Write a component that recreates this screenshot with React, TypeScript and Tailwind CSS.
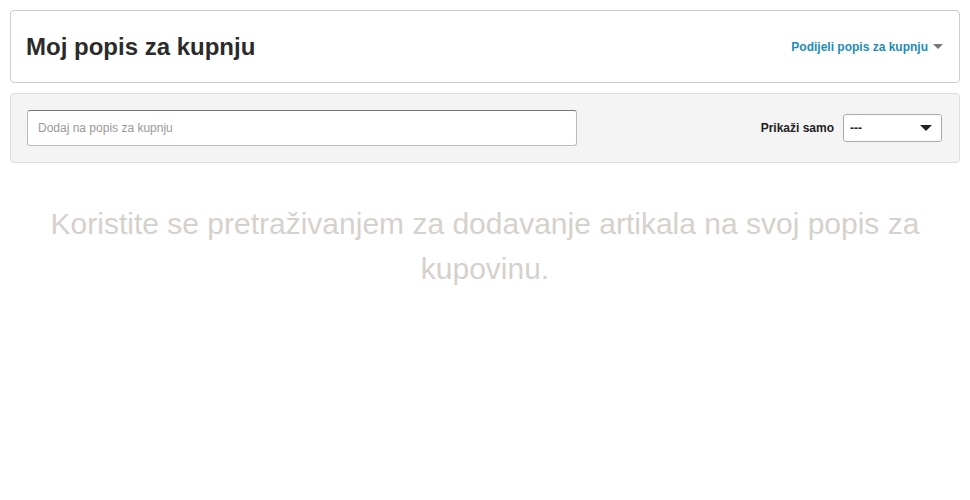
import React from 'react';

export default function App() {
  return (
    <div className="min-h-[500px] bg-white px-[10px] pt-[10px] font-['Liberation_Sans',Arial,sans-serif] text-[#333]">
      <div className="flex h-[73px] items-center justify-between rounded-[4px] border border-[#ccc] bg-white pl-[15px] pr-[16px]">
        <h1 className="text-[24px] font-bold text-[#2b2b2b]">Moj popis za kupnju</h1>
        <button className="flex items-center gap-[5px] text-[12px] font-bold text-[#1e8bb8]">
          Podijeli popis za kupnju
          <span className="h-0 w-0 border-x-[5px] border-t-[5px] border-x-transparent border-t-[#777]" />
        </button>
      </div>

      <div className="mt-[10px] flex h-[70px] items-center justify-between rounded-[4px] border border-[#ddd] bg-[#f4f4f4] pl-[16px] pr-[17px]">
        <input
          className="h-[36px] w-[550px] rounded-[3px] border border-[#bbb] border-t-[#777] bg-white px-[10px] text-[12px] outline-none placeholder:text-[#999]"
          placeholder="Dodaj na popis za kupnju"
        />
        <div className="flex items-center gap-[9px]">
          <span className="text-[12px] font-bold text-[#222]">Prikaži samo</span>
          <div className="flex h-[28px] w-[99px] items-center justify-between rounded-[3px] border border-[#aaa] bg-white pl-[6px] pr-[9px] text-[12px] font-bold text-[#222]">
            ---
            <span className="h-0 w-0 border-x-[6px] border-t-[6px] border-x-transparent border-t-[#222]" />
          </div>
        </div>
      </div>

      <p className="mx-auto mt-[38px] max-w-[900px] text-center text-[30px] leading-[45px] text-[#d5d1cc]">
        Koristite se pretraživanjem za dodavanje artikala na svoj popis za kupovinu.
      </p>
    </div>
  );
}
